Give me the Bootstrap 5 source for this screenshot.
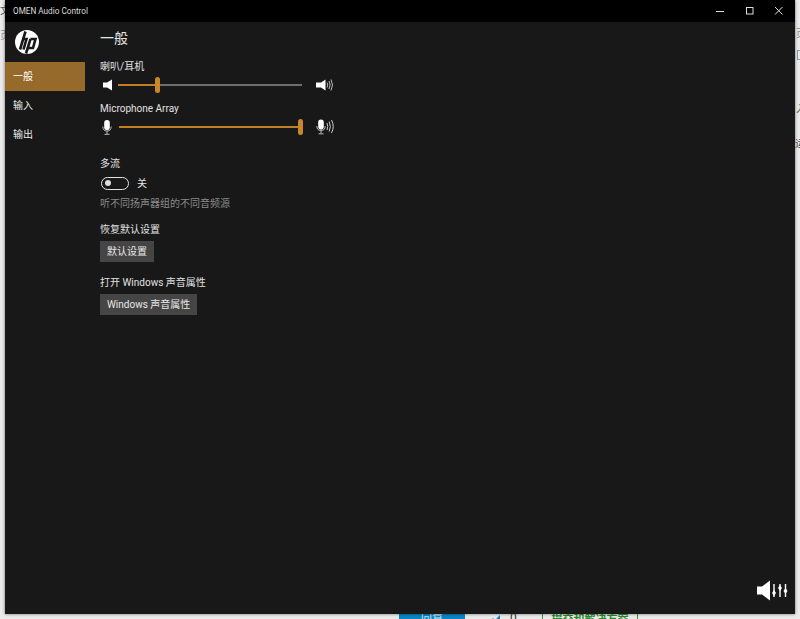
<!DOCTYPE html>
<html lang="zh">
<head>
<meta charset="utf-8">
<title>OMEN Audio Control</title>
<link href="https://cdn.jsdelivr.net/npm/bootstrap@5.3.0/dist/css/bootstrap.min.css" rel="stylesheet">
<style>
html,body{height:619px;overflow:hidden}
body{background:#ebebeb;font-family:Roboto,"Noto Sans CJK SC",sans-serif;font-size:10px;color:#e6e6e6;position:relative}
.bg-frag{position:absolute;color:#555;font-size:10px;line-height:12px}
.bg-box{position:absolute;left:797px;top:50px;width:3px;height:10px;border:1px solid #8a9bb0;border-right:0}
.app-win{position:absolute;left:5px;top:0;width:790px;height:614px;background:#181818;box-shadow:0 0 3px rgba(0,0,0,.55);display:flex;flex-direction:column}
.title-bar{height:22px;background:#000;flex:none;padding-left:8px;font-size:8.2px;color:#ddd}
.win-btn{width:29px;height:22px;display:flex;align-items:center;justify-content:center}
.win-btns{margin-right:2px}
.app-main{flex:1;min-height:0;position:relative}
.side-nav{width:80px;flex:none}
.hp-logo{height:40px;padding-left:9px;display:flex;align-items:center}
.nav-row{height:29px;padding-left:8px;display:flex;align-items:center;color:#eee}
.nav-row.on{background:#956a2b;color:#fff}
.content-pane{padding:6px 0 0 15px;flex:1;min-width:0}
.page-title{font-size:14px;font-weight:400;line-height:20px;margin:0 0 12px;color:#e4e4e4}
.ctl-label{line-height:14px;color:#e2e2e2}
.slider-row{display:flex;align-items:center;height:20px}
.ico-l{width:18px;flex:none;display:flex;padding-left:3px}
.sl-track{height:2px;background:#6e6e6e;position:relative;flex:none}
.sl-fill{height:2px;background:#c17f24}
.sl-thumb{position:absolute;top:-7px;width:5px;height:16px;background:#c9862a;border-radius:2.5px;margin-left:-2px}
.ico-r{margin-left:14px;display:flex}
.toggle-row{display:flex;align-items:center;margin-top:5px;height:14px;padding-left:1px}
.toggle-pill{width:28px;height:13px;border:1.6px solid #e4e4e4;border-radius:7px;position:relative;flex:none}
.toggle-dot{position:absolute;left:3px;top:2px;width:6px;height:6px;border-radius:50%;background:#ddd}
.hint-text{color:#8b8b8b;margin-top:7px;line-height:14px}
.act-btn{display:inline-block;background:#454545;color:#e8e8e8;border:0;border-radius:0;height:21px;padding:0 7px;font-size:10px;line-height:21px;margin-top:4px}
.bottom-ico{position:absolute;right:7px;bottom:13px}
.blue-bit{position:absolute;left:399px;top:614px;width:66px;height:5px;background:#0b84c4;overflow:hidden;color:#cfe6f5;text-align:center;font-size:11px;line-height:11px}
.green-bit{position:absolute;left:542px;top:614px;width:96px;height:5px;border-left:1px solid #3a9a3a;border-right:1px solid #3a9a3a;overflow:hidden;color:#2b8a2b;text-align:center;font-size:11px;line-height:11px;font-weight:700}
.mid-bit{position:absolute;left:487px;top:612px;height:7px;overflow:hidden;color:#333;font-size:12px;line-height:12px}
</style>
</head>
<body>
<div class="bg-frag" style="left:0;top:5px">文</div>
<div class="bg-frag" style="left:0;top:30px;color:#999">页</div>
<div class="bg-frag" style="left:796px;top:28px;color:#888">页</div>
<div class="bg-box"></div>
<div class="bg-frag" style="left:796px;top:103px">入</div>
<div class="bg-frag" style="left:795px;top:138px">运</div>
<div class="blue-bit">回复</div>
<div class="mid-bit"><svg width="20" height="8" viewBox="0 0 20 8"><path d="M1 8 6 3 8 5 13 0V8z" fill="#1f7fc0"/></svg> 0</div>
<div class="green-bit">提交和解决方案</div>

<div class="app-win">
  <div class="title-bar d-flex align-items-center justify-content-between">
    <span>OMEN Audio Control</span>
    <div class="d-flex win-btns">
      <div class="win-btn"><svg width="10" height="10" viewBox="0 0 10 10"><path d="M0 5.5H8" stroke="#ddd" fill="none"/></svg></div>
      <div class="win-btn"><svg width="10" height="10" viewBox="0 0 10 10"><rect x="1.5" y="1.5" width="6.5" height="6.5" stroke="#ddd" fill="none"/></svg></div>
      <div class="win-btn"><svg width="10" height="10" viewBox="0 0 10 10"><path d="M1 1 8.5 8.5M8.5 1 1 8.5" stroke="#ddd" fill="none"/></svg></div>
    </div>
  </div>
  <div class="app-main d-flex">
    <nav class="side-nav">
      <div class="hp-logo">
        <svg width="26" height="26" viewBox="0 0 26 26"><circle cx="13" cy="13" r="12" fill="#fff"/><g fill="none" stroke="#181818" stroke-width="2.6"><path d="M11.5 2.5 6 20.5"/><path d="M8.5 10H12.5L9.5 20.5"/><path d="M16.5 10 12 24.5"/><path d="M16.5 10H21.5L19 19H14"/></g></svg>
      </div>
      <div class="nav-row on">一般</div>
      <div class="nav-row">输入</div>
      <div class="nav-row">输出</div>
    </nav>
    <main class="content-pane">
      <h1 class="page-title">一般</h1>
      <div class="ctl-label">喇叭/耳机</div>
      <div class="slider-row" style="margin-top:1px">
        <div class="ico-l"><svg width="10" height="12" viewBox="0 0 10 12"><path d="M0 3.5H4L9 .5V11.5L4 8.5H0z" fill="#fff"/></svg></div>
        <div class="sl-track" style="width:184px"><div class="sl-fill" style="width:39px"></div><div class="sl-thumb" style="left:39px"></div></div>
        <div class="ico-r"><svg width="18" height="14" viewBox="0 0 18 14"><path d="M0 4.5H5L9.5 1.5V12.5L5 9.5H0z" fill="#fff"/><g fill="none" stroke="#bbb"><path d="M11 4.5Q12.5 7 11 9.5"/><path d="M13 3Q15.2 7 13 11"/><path d="M15 1.5Q18 7 15 12.5"/></g></svg></div>
      </div>
      <div class="ctl-label" style="margin-top:5px;padding-top:2px">Microphone Array</div>
      <div class="slider-row" style="margin-top:1px">
        <div class="ico-l" style="width:19px;padding-left:0"><svg width="10" height="15" viewBox="0 0 10 15" style="margin-left:2px"><rect x="2.2" y="0" width="5.6" height="10" rx="2.8" fill="#fff"/><path d="M.8 6.5Q.8 11 5 11T9.2 6.5M5 11V14M2.5 14.3H7.5" fill="none" stroke="#bbb"/></svg></div>
        <div class="sl-track" style="width:182px;background:#c17f24"><div class="sl-fill" style="width:182px"></div><div class="sl-thumb" style="left:181px"></div></div>
        <div class="ico-r" style="margin-left:15px"><svg width="20" height="16" viewBox="0 0 20 16"><rect x="2.2" y=".5" width="5.6" height="10" rx="2.8" fill="#fff"/><path d="M.8 7Q.8 11.5 5 11.5T9.2 7M5 11.5V14.5M2.5 14.8H7.5" fill="none" stroke="#bbb"/><g fill="none" stroke="#ccc"><path d="M11 4Q12.5 7.5 11 11"/><path d="M13.2 2.5Q15.5 7.5 13.2 12.5"/><path d="M15.5 1Q19 7.5 15.5 14"/></g></svg></div>
      </div>
      <div class="ctl-label" style="margin-top:20px">多流</div>
      <div class="toggle-row">
        <div class="toggle-pill"><div class="toggle-dot"></div></div>
        <span class="ms-2">关</span>
      </div>
      <div class="hint-text">听不同扬声器组的不同音频源</div>
      <div class="ctl-label" style="margin-top:12px">恢复默认设置</div>
      <div><button type="button" class="btn act-btn">默认设置</button></div>
      <div class="ctl-label" style="margin-top:14px">打开 Windows 声音属性</div>
      <div><button type="button" class="btn act-btn">Windows 声音属性</button></div>
    </main>
    <div class="bottom-ico">
      <svg width="31" height="21" viewBox="0 0 31 21"><path d="M0 6.5H5L13 .5V20.5L5 14.5H0z" fill="#fff"/><g stroke="#fff" stroke-width="1.4" fill="none"><path d="M17 4V17M23 4V17M28.500 4V17"/></g><g fill="#fff"><path d="M15 13 17 16 19 13 17 10z"/><path d="M21 8 23 11 25 8 23 5z"/><path d="M26.500 11 28.500 14 30.500 11 28.500 8z"/></g></svg>
    </div>
  </div>
</div>
</body>
</html>
